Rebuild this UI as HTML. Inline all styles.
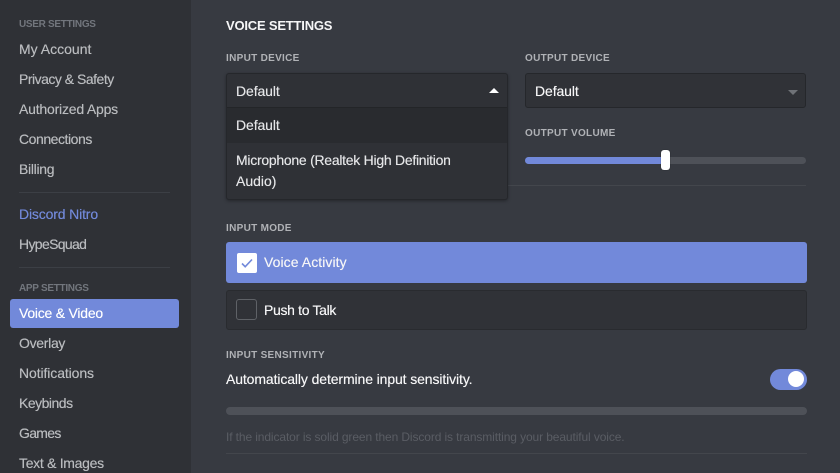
<!DOCTYPE html>
<html><head><meta charset="utf-8">
<style>
html,body{margin:0;padding:0;width:840px;height:473px;overflow:hidden;background:#373a41}
body{position:relative;font-family:"Liberation Sans",sans-serif}
.a{position:absolute;white-space:nowrap}
.t{position:absolute;white-space:nowrap;line-height:20px;height:20px}
.n{left:19px;font-size:14px;color:#b9bbbe;text-shadow:0 0 .4px currentColor}
.h{font-size:10px;font-weight:bold;letter-spacing:.3px;line-height:14px;height:14px}
.s{letter-spacing:-.3px}
.m{font-size:14px;color:#e4e5e7;left:236px;text-shadow:0 0 .4px currentColor}
</style></head><body>
<div class="a" style="left:0;top:0;width:191px;height:473px;background:#2f3136"></div>

<div class="t h s" style="left:19px;top:18px;color:#72767d">USER SETTINGS</div>
<div class="t n" style="top:39px">My Account</div>
<div class="t n" style="top:69px;letter-spacing:-.5px">Privacy &amp; Safety</div>
<div class="t n" style="top:99px;letter-spacing:-.2px">Authorized Apps</div>
<div class="t n" style="top:129px;letter-spacing:-.45px">Connections</div>
<div class="t n" style="top:159px;letter-spacing:-.3px">Billing</div>
<div class="a" style="left:19px;top:192px;width:151px;height:1px;background:#3c3f45"></div>
<div class="t n" style="top:204px;color:#7289da;letter-spacing:-.15px">Discord Nitro</div>
<div class="t n" style="top:234px;letter-spacing:-.65px">HypeSquad</div>
<div class="a" style="left:19px;top:267px;width:151px;height:1px;background:#3c3f45"></div>
<div class="t h s" style="left:19px;top:282px;color:#72767d">APP SETTINGS</div>
<div class="a" style="left:10px;top:299px;width:169px;height:29px;background:#7289da;border-radius:3px"></div>
<div class="t n" style="top:303px;color:#fff;letter-spacing:-.23px">Voice &amp; Video</div>
<div class="t n" style="top:333px;letter-spacing:-.3px">Overlay</div>
<div class="t n" style="top:363px;letter-spacing:-.1px">Notifications</div>
<div class="t n" style="top:393px;letter-spacing:-.5px">Keybinds</div>
<div class="t n" style="top:423px;letter-spacing:-.7px">Games</div>
<div class="t n" style="top:453px;letter-spacing:-.3px">Text &amp; Images</div>

<div class="t" style="left:226px;top:16px;font-size:13px;font-weight:bold;color:#f6f6f7;letter-spacing:-.2px">VOICE SETTINGS</div>
<div class="t h" style="left:226px;top:52px;color:#b0b2b6">INPUT DEVICE</div>
<div class="t h" style="left:525px;top:52px;color:#b0b2b6">OUTPUT DEVICE</div>

<div class="a" style="left:525px;top:73px;width:279px;height:33px;background:#303237;border:1px solid #25272b;border-radius:3px"></div>
<div class="t m" style="left:535px;top:81px;color:#f6f6f7;letter-spacing:-.1px">Default</div>
<div class="a" style="left:788px;top:90px;width:0;height:0;border-left:5px solid transparent;border-right:5px solid transparent;border-top:5px solid #6f7277"></div>

<div class="t h" style="left:525px;top:127px;color:#b0b2b6">OUTPUT VOLUME</div>
<div class="a" style="left:525px;top:157px;width:281px;height:7px;background:#4e5158;border-radius:4px"></div>
<div class="a" style="left:525px;top:157px;width:141px;height:7px;background:#7289da;border-radius:4px 0 0 4px"></div>
<div class="a" style="left:661px;top:150px;width:9px;height:20px;background:#fff;border-radius:3px;box-shadow:0 0 1px rgba(0,0,0,.5)"></div>
<div class="a" style="left:226px;top:185px;width:580px;height:1px;background:#43464c"></div>

<div class="a" style="left:226px;top:73px;width:280px;height:125px;background:#2f3136;border:1px solid #25272b;border-radius:3px;box-shadow:0 1px 3px rgba(0,0,0,.35)"></div>
<div class="a" style="left:227px;top:108px;width:280px;height:35px;background:#292b2f"></div>
<div class="a" style="left:227px;top:107px;width:280px;height:1px;background:#232528"></div>
<div class="t m" style="top:81px;letter-spacing:-.1px">Default</div>
<div class="a" style="left:489px;top:88px;width:0;height:0;border-left:5px solid transparent;border-right:5px solid transparent;border-bottom:5px solid #fff"></div>
<div class="t m" style="top:115px;letter-spacing:-.1px">Default</div>
<div class="t m" style="top:150px;letter-spacing:-.27px">Microphone (Realtek High Definition</div>
<div class="t m" style="top:171px">Audio)</div>

<div class="t h" style="left:226px;top:222px;color:#b0b2b6">INPUT MODE</div>
<div class="a" style="left:226px;top:242px;width:581px;height:41px;background:#7289da;border-radius:3px"></div>
<div class="a" style="left:237px;top:253px;width:20px;height:20px;background:#fff;border-radius:2px"></div>
<svg class="a" style="left:237px;top:253px" width="20" height="20" viewBox="0 0 20 20"><path d="M5 10.5L8.2 13.7L15 6.5" fill="none" stroke="#7289da" stroke-width="1.6"/></svg>
<div class="t" style="left:264px;top:252px;font-size:14px;color:#f6f6f7;text-shadow:0 0 .4px currentColor;letter-spacing:.07px">Voice Activity</div>
<div class="a" style="left:226px;top:290px;width:579px;height:38px;background:#303237;border:1px solid #292b2f;border-radius:3px"></div>
<div class="a" style="left:236px;top:299px;width:19px;height:19px;border:1px solid #5f6267;border-radius:3px"></div>
<div class="t" style="left:264px;top:300px;font-size:14px;color:#f6f6f7;text-shadow:0 0 .4px currentColor;letter-spacing:-.33px">Push to Talk</div>

<div class="t h" style="left:226px;top:349px;color:#b0b2b6">INPUT SENSITIVITY</div>
<div class="t" style="left:226px;top:369px;font-size:14px;color:#f6f6f7;text-shadow:0 0 .4px currentColor;letter-spacing:-.11px">Automatically determine input sensitivity.</div>
<div class="a" style="left:770px;top:369px;width:37px;height:21px;background:#7289da;border-radius:11px"></div>
<div class="a" style="left:788px;top:371px;width:16px;height:16px;background:#fff;border-radius:50%"></div>
<div class="a" style="left:226px;top:407px;width:581px;height:8px;background:#4e5158;border-radius:4px"></div>
<div class="t" style="left:226px;top:427px;font-size:12px;color:#5a5d64;letter-spacing:-.11px">If the indicator is solid green then Discord is transmitting your beautiful voice.</div>
<div class="a" style="left:226px;top:453px;width:581px;height:1px;background:#43464c"></div>
</body></html>
